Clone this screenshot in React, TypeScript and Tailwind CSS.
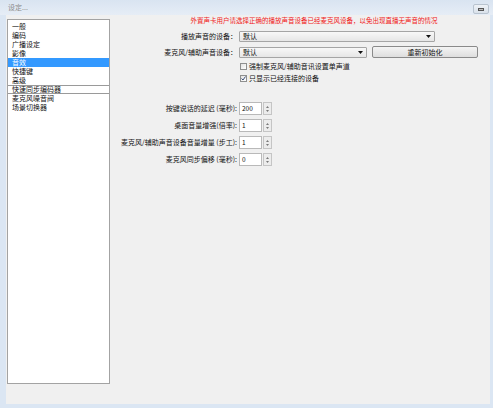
import React from "react";

const font = { fontFamily: '"Noto Sans CJK SC", "Noto Sans", sans-serif' };

function Select({ width }: { width: string }) {
  return (
    <div
      className={`${width} h-[11px] border border-[#a5a5a5] rounded-[1px] bg-gradient-to-b from-[#f8f8f8] to-[#e6e6e6] flex items-center justify-between pl-[3px] pr-[3px]`}
    >
      <span className="text-[7px] leading-none text-[#111]">默认</span>
      <svg width="5" height="3" viewBox="0 0 5 3">
        <path d="M0 0 L5 0 L2.5 3 Z" fill="#111" />
      </svg>
    </div>
  );
}

function Checkbox({ checked, label }: { checked?: boolean; label: string }) {
  return (
    <div className="flex items-center h-[7px] gap-[2px]">
      <div className="w-[7px] h-[7px] border border-[#8e8f8f] bg-gradient-to-br from-[#e2e2e2] to-[#ffffff] flex items-center justify-center">
        {checked && (
          <svg width="5" height="5" viewBox="0 0 5 5">
            <path d="M0.5 2.5 L2 4 L4.5 0.5" stroke="#3a4f7a" strokeWidth="1" fill="none" />
          </svg>
        )}
      </div>
      <span className="text-[7px] leading-none text-[#111]">{label}</span>
    </div>
  );
}

function SpinRow({ label, value }: { label: string; value: string }) {
  return (
    <div className="flex items-center h-[13px]">
      <div className="w-[128px] text-right text-[7px] leading-none text-[#111] pr-[2px]">{label}</div>
      <div className="w-[23px] h-[13px] border border-[#b9b9b9] bg-white flex items-center pl-[2px]">
        <span className="text-[6.5px] leading-none text-[#111]">{value}</span>
      </div>
      <div className="ml-[1px] w-[9px] h-[13px] border border-[#c5c5c5] bg-[#ececec] flex flex-col items-center justify-center gap-[2px]">
        <svg width="3" height="2" viewBox="0 0 3 2">
          <path d="M0 2 L3 2 L1.5 0 Z" fill="#7a7a7a" />
        </svg>
        <svg width="3" height="2" viewBox="0 0 3 2">
          <path d="M0 0 L3 0 L1.5 2 Z" fill="#7a7a7a" />
        </svg>
      </div>
    </div>
  );
}

export default function App() {
  const items = ["一般", "编码", "广播设定", "影像", "音效", "快捷键", "高级", "快速同步编码器", "麦克风噪音阀", "场景切换器"];
  return (
    <div className="w-[493px] h-[408px] bg-[#dbe6f3] flex flex-col overflow-hidden" style={font}>
      <div className="h-[15px] bg-gradient-to-b from-[#d9e4f1] to-[#e6edf6] flex items-center justify-between pl-[8px] pr-[4px]">
        <span className="text-[7px] leading-none text-[#8a8a8a]">设定...</span>
        <div className="w-[16px] h-[10px] border border-[#b8c3cf] rounded-[2px] bg-gradient-to-b from-[#eef2f7] to-[#d9e1ea] flex items-center justify-center mt-[3px]">
          <div className="w-[6px] h-[3px] border border-[#555] bg-[#bbb]" />
        </div>
      </div>
      <div className="flex-1 ml-[6px] mr-[3px] mb-[4px] bg-[#f0f0f0] flex">
        <div className="mt-[4px] ml-[1px] w-[103px] h-[365px] border border-[#a3a3a3] bg-white pt-[2px] shrink-0">
          {items.map((it, i) => (
            <div
              key={it}
              className={
                "h-[9px] flex items-center pl-[4px] text-[7px] leading-none " +
                (i === 4
                  ? "bg-[#3399ff] text-white"
                  : i === 7
                  ? "text-[#111] border-y border-[#9a9a9a]"
                  : "text-[#111]")
              }
            >
              {it}
            </div>
          ))}
        </div>
        <div className="flex-1 flex flex-col pt-[1px]">
          <div className="h-[8px] flex items-center justify-center pl-[28px]">
            <span className="text-[6.5px] leading-none text-[#f01818]">
              外置声卡用户请选择正确的播放声音设备已经麦克风设备，以免出现直播无声音的情况
            </span>
          </div>
          <div className="mt-[7px] flex items-center h-[11px]">
            <div className="w-[129px] text-right text-[7px] leading-none text-[#111] pr-[2px]">播放声音的设备：</div>
            <Select width="w-[196px]" />
          </div>
          <div className="mt-[4px] flex items-center h-[12px]">
            <div className="w-[129px] text-right text-[7px] leading-none text-[#111] pr-[2px]">麦克风/辅助声音设备：</div>
            <Select width="w-[128px]" />
            <div className="ml-[5px] w-[106px] h-[12px] border border-[#8a8a8a] rounded-[2px] bg-gradient-to-b from-[#f4f4f4] to-[#dedede] flex items-center justify-center">
              <span className="text-[7px] leading-none text-[#111]">重新初始化</span>
            </div>
          </div>
          <div className="mt-[5px] pl-[130px]">
            <Checkbox label="强制麦克风/辅助音讯设置单声道" />
          </div>
          <div className="mt-[5px] pl-[130px]">
            <Checkbox checked label="只显示已经连接的设备" />
          </div>
          <div className="mt-[20px] flex flex-col gap-[4px] pl-[1px]">
            <SpinRow label="按键说话的延迟 (毫秒):" value="200" />
            <SpinRow label="桌面音量增强(倍率):" value="1" />
            <SpinRow label="麦克风/辅助声音设备音量增量 (步工):" value="1" />
            <SpinRow label="麦克风同步偏移 (毫秒):" value="0" />
          </div>
        </div>
      </div>
    </div>
  );
}
